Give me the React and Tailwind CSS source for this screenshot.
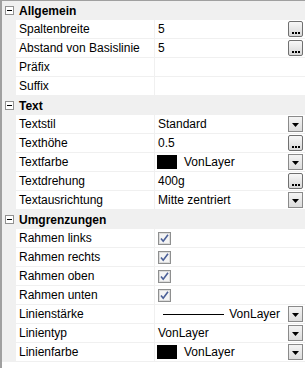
import React from "react";

// Eigenschaftenraster (Property Grid) im Stil von Windows Forms
const sections = [
  {
    title: "Allgemein",
    rows: [
      { label: "Spaltenbreite", value: "5", button: "dots" },
      { label: "Abstand von Basislinie", value: "5", button: "dots" },
      { label: "Präfix" },
      { label: "Suffix" },
    ],
  },
  {
    title: "Text",
    rows: [
      { label: "Textstil", value: "Standard", button: "drop" },
      { label: "Texthöhe", value: "0.5", button: "dots" },
      { label: "Textfarbe", value: "VonLayer", swatch: true, button: "drop" },
      { label: "Textdrehung", value: "400g", button: "dots" },
      { label: "Textausrichtung", value: "Mitte zentriert", button: "drop" },
    ],
  },
  {
    title: "Umgrenzungen",
    rows: [
      { label: "Rahmen links", check: true },
      { label: "Rahmen rechts", check: true },
      { label: "Rahmen oben", check: true },
      { label: "Rahmen unten", check: true },
      { label: "Linienstärke", value: "VonLayer", line: true, button: "drop" },
      { label: "Linientyp", value: "VonLayer", button: "drop" },
      { label: "Linienfarbe", value: "VonLayer", swatch: true, button: "drop" },
    ],
  },
];

const MinusBox = () => (
  <div className="w-[9px] h-[9px] border border-[#919191] bg-white flex items-center justify-center">
    <div className="w-[5px] h-px bg-black" />
  </div>
);

const DotsButton = () => (
  <div className="w-[15px] h-[16px] border border-[#707070] rounded-[2px] bg-gradient-to-b from-[#f8f8f8] to-[#d8d8d8] flex items-end justify-center gap-[1px] pb-[2px]">
    <div className="w-[2px] h-[2px] bg-black" />
    <div className="w-[2px] h-[2px] bg-black" />
    <div className="w-[2px] h-[2px] bg-black" />
  </div>
);

const DropButton = () => (
  <div className="w-[15px] h-[16px] border border-[#8a8a8a] bg-gradient-to-b from-[#f4f4f4] to-[#dcdcdc] flex items-center justify-center pt-[2px]">
    <svg width="7" height="4" viewBox="0 0 7 4">
      <polygon points="0,0 7,0 3.5,4" fill="#000" />
    </svg>
  </div>
);

const CheckBox = () => (
  <svg width="13" height="13" viewBox="0 0 13 13">
    <rect x="0.5" y="0.5" width="12" height="12" fill="#f4f4f4" stroke="#8e8f8f" />
    <rect x="1.5" y="1.5" width="10" height="10" fill="none" stroke="#dcdcdc" />
    <path d="M3 6.5 L5.2 9.2 L10 2.8" fill="none" stroke="#4a5f97" strokeWidth="1.6" />
  </svg>
);

function Row({ row }) {
  return (
    <div className="flex h-[19px]">
      <div className="w-[14px] bg-[#f0f0f0]" />
      <div className="w-[138px] border-b border-[#f0f0f0] pl-[3px] flex items-center whitespace-nowrap">
        {row.label}
      </div>
      <div className="w-px bg-[#f0f0f0]" />
      <div className="flex-1 border-b border-[#f0f0f0] flex items-center pl-[3px] pr-[2px]">
        {row.check && (
          <div className="pt-[1px]">
            <CheckBox />
          </div>
        )}
        {row.swatch && <div className="w-[20px] h-[14px] bg-black mr-[7px] ml-[-1px]" />}
        {row.line ? (
          <div className="flex-1 flex items-center pl-[5px] pr-[8px]">
            <div className="w-[61px] h-px bg-black" />
            <span className="ml-auto">{row.value}</span>
          </div>
        ) : (
          <span className="flex-1 whitespace-nowrap">{row.value}</span>
        )}
        {row.button === "dots" && <DotsButton />}
        {row.button === "drop" && <DropButton />}
      </div>
    </div>
  );
}

export default function App() {
  return (
    <div className="w-[305px] h-[368px] bg-white border-t border-l-2 border-[#a0a0a0] font-['Liberation_Sans',Arial,sans-serif] text-[12px] text-black leading-none overflow-hidden">
      {sections.map((s) => (
        <div key={s.title}>
          <div className="flex h-[19px] bg-[#f0f0f0] items-center">
            <div className="w-[14px] flex justify-center">
              <MinusBox />
            </div>
            <span className="font-bold pl-[3px]">{s.title}</span>
          </div>
          {s.rows.map((r) => (
            <Row key={r.label} row={r} />
          ))}
        </div>
      ))}
    </div>
  );
}
